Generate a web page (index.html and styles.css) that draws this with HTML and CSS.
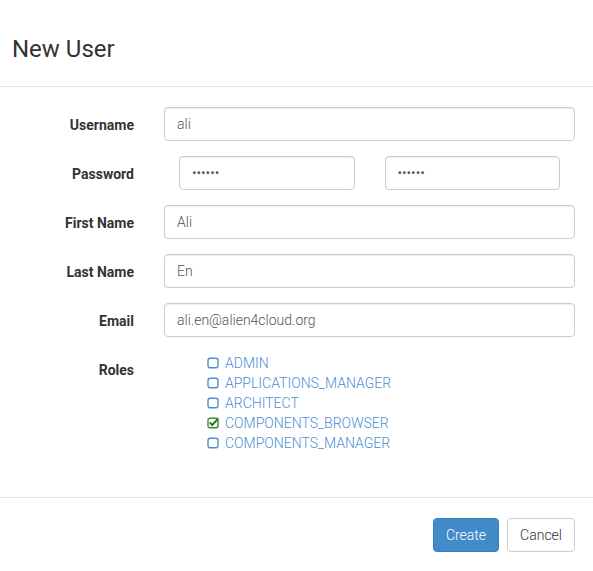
FILE: index.html
```html
<!DOCTYPE html>
<html>
<head>
<meta charset="utf-8">
<link rel="stylesheet" href="styles.css">
</head>
<body>
<div class="modal">
  <div class="modal-header">
    <h3 class="modal-title">New User</h3>
  </div>
  <form class="modal-body">
    <div class="row">
      <label class="lbl">Username</label>
      <div class="ctl"><input class="inp" type="text" value="ali"></div>
    </div>
    <div class="row">
      <label class="lbl">Password</label>
      <div class="ctl pw">
        <input class="inp" type="password" value="aaaaaa">
        <input class="inp" type="password" value="aaaaaa">
      </div>
    </div>
    <div class="row">
      <label class="lbl">First Name</label>
      <div class="ctl"><input class="inp" type="text" value="Ali"></div>
    </div>
    <div class="row">
      <label class="lbl">Last Name</label>
      <div class="ctl"><input class="inp" type="text" value="En"></div>
    </div>
    <div class="row">
      <label class="lbl">Email</label>
      <div class="ctl"><input class="inp" type="text" value="ali.en@alien4cloud.org"></div>
    </div>
    <div class="row roles-row">
      <label class="lbl">Roles</label>
      <div class="ctl">
        <ul class="roles">
          <li><svg class="box" width="12" height="12" viewBox="0 0 12 12"><rect x="1" y="1.2" width="10" height="9.6" rx="2.2" fill="none" stroke="#4a8fd6" stroke-width="1.4"/></svg>ADMIN</li>
          <li><svg class="box" width="12" height="12" viewBox="0 0 12 12"><rect x="1" y="1.2" width="10" height="9.6" rx="2.2" fill="none" stroke="#4a8fd6" stroke-width="1.4"/></svg>APPLICATIONS_MANAGER</li>
          <li><svg class="box" width="12" height="12" viewBox="0 0 12 12"><rect x="1" y="1.2" width="10" height="9.6" rx="2.2" fill="none" stroke="#4a8fd6" stroke-width="1.4"/></svg>ARCHITECT</li>
          <li><svg class="box" width="12" height="12" viewBox="0 0 12 12"><rect x="1" y="1.2" width="10" height="9.6" rx="1.8" fill="none" stroke="#3c8c2c" stroke-width="1.4"/><path d="M2.8 5.6 L5.2 8 L11.2 1.6" fill="none" stroke="#2a7a1e" stroke-width="2.1"/></svg>COMPONENTS_BROWSER</li>
          <li><svg class="box" width="12" height="12" viewBox="0 0 12 12"><rect x="1" y="1.2" width="10" height="9.6" rx="2.2" fill="none" stroke="#4a8fd6" stroke-width="1.4"/></svg>COMPONENTS_MANAGER</li>
        </ul>
      </div>
    </div>
  </form>
  <div class="modal-footer">
    <button class="btn btn-primary" type="button">Create</button>
    <button class="btn btn-default" type="button">Cancel</button>
  </div>
</div>
</body>
</html>
```

FILE: styles.css
```css
html, body {
  margin: 0;
  padding: 0;
  background: #fff;
}
body {
  font-family: Roboto, "Liberation Sans", sans-serif;
  font-size: 14px;
  line-height: 20px;
  color: #333;
}
.modal {
  width: 593px;
  height: 571px;
  background: #fff;
}
.modal-header {
  padding: 36px 12px 24px;
  border-bottom: 1px solid #e5e5e5;
}
.modal-title {
  margin: 0;
  font-size: 24px;
  line-height: 26px;
  font-weight: 400;
  color: #333;
}
.modal-body {
  margin: 0;
  padding: 20px 18px 29px 0;
}
.row {
  display: flex;
  margin-bottom: 15px;
}
.lbl {
  width: 134px;
  padding-right: 30px;
  padding-top: 8px;
  text-align: right;
  font-weight: 700;
  flex: none;
}
.ctl {
  flex: 1;
}
.inp {
  display: block;
  box-sizing: border-box;
  width: 100%;
  height: 34px;
  padding: 6px 12px;
  margin: 0;
  font-family: Roboto, "Liberation Sans", sans-serif;
  font-size: 14px;
  font-weight: 300;
  line-height: 20px;
  color: #555;
  background: #fff;
  border: 1px solid #ccc;
  border-radius: 4px;
  box-shadow: inset 0 1px 1px rgba(0,0,0,0.075);
  outline: none;
}
.pw {
  display: grid;
  grid-template-columns: 1fr 1fr;
  column-gap: 30px;
  padding: 0 15px;
}
.roles {
  list-style: none;
  margin: 0;
  padding: 1px 0 0 43px;
  color: #4a8fd6;
  font-weight: 300;
}
.roles li {
  display: flex;
  align-items: center;
  height: 20px;
}
.box {
  margin-right: 6px;
  flex: none;
}
.modal-footer {
  border-top: 1px solid #e5e5e5;
  padding: 20px 18px 20px;
  display: flex;
  justify-content: flex-end;
  gap: 8px;
}
.btn {
  height: 34px;
  padding: 6px 12px;
  font-family: Roboto, "Liberation Sans", sans-serif;
  font-size: 14px;
  font-weight: 300;
  line-height: 20px;
  border-radius: 4px;
  border: 1px solid transparent;
  cursor: pointer;
}
.btn-primary {
  color: #fff;
  background: #428bca;
  border-color: #357ebd;
}
.btn-default {
  color: #333;
  background: #fff;
  border-color: #ccc;
}
```
